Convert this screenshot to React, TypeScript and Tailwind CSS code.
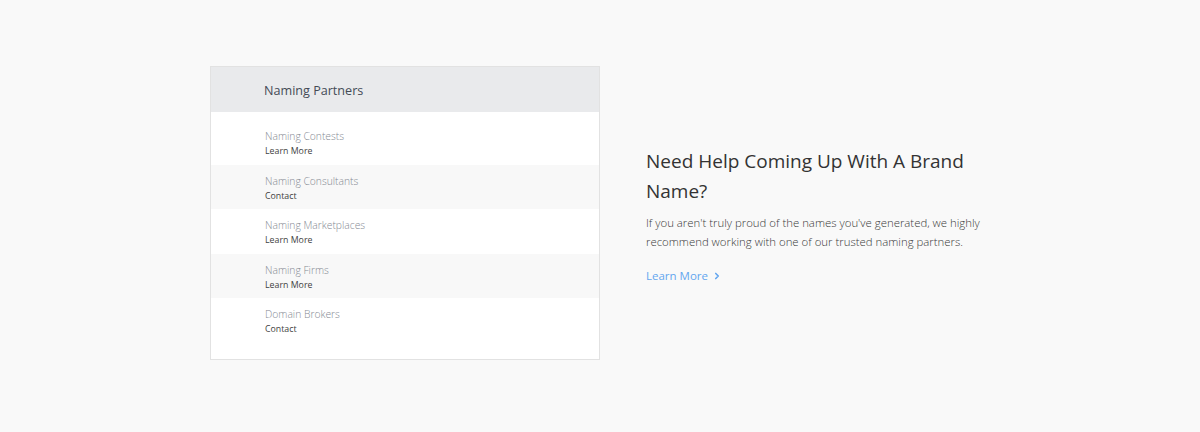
import { ChevronRight } from "lucide-react";

const partners = [
  { name: "Naming Contests", action: "Learn More" },
  { name: "Naming Consultants", action: "Contact" },
  { name: "Naming Marketplaces", action: "Learn More" },
  { name: "Naming Firms", action: "Learn More" },
  { name: "Domain Brokers", action: "Contact" },
];

export default function App() {
  return (
    <div
      className="min-h-[432px] w-full bg-[#f9f9f9] flex items-center justify-center pb-[6px]"
      style={{ fontFamily: "'Open Sans', 'Liberation Sans', sans-serif" }}
    >
      <div className="flex items-start gap-[46px] pl-[1px]">
        {/* partners card */}
        <div className="w-[390px] bg-white border border-[#e2e2e2]">
          <div className="h-[45px] bg-[#e9eaec] flex items-center pl-[53px] pt-[3px]">
            <span className="text-[12.6px] text-[#444b56]">Naming Partners</span>
          </div>
          <ul className="pt-2 pb-4">
            {partners.map((p, i) => (
              <li
                key={p.name}
                className={`h-[44.5px] flex flex-col justify-center pl-[54px] pt-[1px] ${
                  i % 2 === 1 ? "bg-[#f8f8f8]" : "bg-white"
                }`}
              >
                <span className="text-[10.3px] leading-[16px] font-light text-[#858a93]">{p.name}</span>
                <span className="text-[8.8px] leading-[14px] text-[#3f3f3f]">{p.action}</span>
              </li>
            ))}
          </ul>
        </div>

        {/* copy */}
        <div className="w-[345px] mt-[80px]">
          <h2 className="text-[19px] leading-[30px] text-[#333] font-normal pr-[10px]">
            Need Help Coming Up With A Brand Name?
          </h2>
          <p className="mt-[7px] text-[11.4px] leading-[19px] font-light text-[#3a3a3a]">
            If you aren't truly proud of the names you've generated, we highly recommend working
            with one of our trusted naming partners.
          </p>
          <a
            href="#"
            className="mt-[16px] inline-flex items-center gap-[4px] text-[11.5px] leading-[18px] text-[#64a6ef]"
          >
            Learn More
            <ChevronRight className="w-[10px] h-[10px]" strokeWidth={4} />
          </a>
        </div>
      </div>
    </div>
  );
}
